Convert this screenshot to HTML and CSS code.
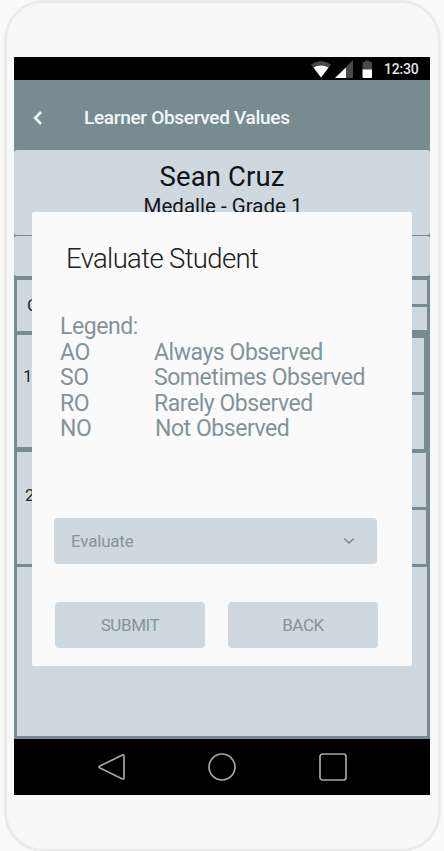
FILE: index.html
```html
<!DOCTYPE html>
<html lang="en">
<head>
<meta charset="utf-8">
<title>Learner Observed Values</title>
<link rel="stylesheet" href="styles.css">
</head>
<body>
<div class="phone">
  <main class="screen">
    <div class="status">
      <svg class="status-icons" width="64" height="19" viewBox="0 0 64 19">
        <path fill="#484848" d="M0 4.500Q10 -2.500 20 4.500L10 17.500Z"/>
        <path fill="#fff" d="M2.500 7.500Q10 3.500 17.500 7.500L10 17.500Z"/>
        <path fill="#484848" d="M42 0V18H24Z"/>
        <path fill="#fff" d="M35 7.500V18H24Z"/>
        <path fill="#484848" d="M51.500 2H54V0.500H58.500V2H61V10H51.500Z"/>
        <path fill="#fff" d="M51.500 9.500H61V17Q61 18 60 18H52.500Q51.500 18 51.500 17Z"/>
      </svg>
      <span class="clock">12:30</span>
    </div>
    <header class="appbar">
      <svg class="back-icon" width="10" height="14" viewBox="0 0 10 14"><path d="M8 1L2.200 7L8 13"/></svg>
      <h1 class="title">Learner Observed Values</h1>
    </header>
    <section class="student">
      <div class="name">Sean Cruz</div>
      <div class="grade">Medalle - Grade 1</div>
    </section>
    <div class="strip"></div>
    <section class="table">
      <div class="row head">
        <div class="cell core">C</div>
        <div class="split"><div class="cell"></div><div class="cell"></div></div>
      </div>
      <div class="row first">
        <div class="cell number">1</div>
        <div class="split"><div class="cell"></div><div class="cell"></div></div>
      </div>
      <div class="row second">
        <div class="cell number two">2</div>
        <div class="split"><div class="cell"></div><div class="cell"></div></div>
      </div>
      <div class="cell rest"></div>
    </section>
    <nav class="navbar">
      <svg width="28" height="28" viewBox="0 0 28 28"><path d="M25 2.200Q27 1.200 27 3.200V24.800Q27 26.800 25 25.800L3 15Q1.200 14 3 13Z"/></svg>
      <svg width="28" height="28" viewBox="0 0 28 28"><circle cx="14" cy="14" r="13"/></svg>
      <svg width="28" height="28" viewBox="0 0 28 28"><rect x="1" y="1" width="26" height="26" rx="2.500"/></svg>
    </nav>
    <div class="dialog" role="dialog">
      <h2 class="dialog-title">Evaluate Student</h2>
      <div class="legend">
        <div class="legend-row"><span>Legend:</span></div>
        <div class="legend-row"><span>AO</span><span class="meaning">Always Observed</span></div>
        <div class="legend-row"><span>SO</span><span class="meaning">Sometimes Observed</span></div>
        <div class="legend-row"><span>RO</span><span class="meaning">Rarely Observed</span></div>
        <div class="legend-row last"><span>NO</span><span class="meaning">Not Observed</span></div>
      </div>
      <div class="select">
        <span class="select-text">Evaluate</span>
        <svg width="12" height="8" viewBox="0 0 12 8"><path d="M1.200 1.500L6 6L10.800 1.500"/></svg>
      </div>
      <div class="actions">
        <button class="button submit">SUBMIT</button>
        <button class="button back">BACK</button>
      </div>
    </div>
  </main>
</div>
</body>
</html>
```
FILE: styles.css
```css
* { box-sizing: border-box; }
body {
  margin: 0;
  height: 851px;
  padding-left: 4px;
  overflow: hidden;
  background: #fafafa;
  font-family: Roboto, sans-serif;
}
.phone {
  width: 437px;
  height: 852px;
  padding: 54px 7px 0;
  border: 3px solid #ebebeb;
  border-radius: 40px;
  background: #f8f8f8;
}
.screen {
  position: relative;
  width: 416px;
  height: 738px;
  background: #788b90;
}
.status {
  display: flex;
  justify-content: flex-end;
  height: 23px;
  padding: 3px 11px 0 0;
  background: #000;
}
.clock {
  margin-left: 9px;
  width: 35px;
  font-size: 14px;
  font-weight: 500;
  line-height: 19px;
  letter-spacing: -0.200px;
  color: #e4e4e4;
  white-space: nowrap;
}
.appbar {
  display: flex;
  align-items: center;
  height: 70px;
  padding: 5px 0 0 19px;
  color: #f2f8fa;
}
.back-icon { fill: none; stroke: #f2f8fa; stroke-width: 2.600; }
.title {
  margin: 0 0 0 41px;
  font-size: 19px;
  font-weight: 500;
  line-height: 24px;
  letter-spacing: -0.300px;
  white-space: nowrap;
}
.student {
  height: 85px;
  padding-top: 11px;
  border-radius: 3px;
  background: #cfd8de;
  color: #101418;
  text-align: center;
}
.name { font-size: 27.500px; line-height: 32px; letter-spacing: 0.100px; }
.grade { padding: 1px 0 0 2px; font-size: 20.500px; line-height: 25px; letter-spacing: 0; }
.strip {
  height: 40px;
  margin-top: 1px;
  border-radius: 3px;
  background: #cfd8de;
}
.table { padding: 4px 3px 3px; }
.row { display: flex; }
.cell { background: #cfd8de; }
.row > .cell { width: 203px; font-size: 17px; color: #20272a; }
.split { display: flex; flex: 1; flex-direction: column; gap: 3px; }
.split .cell { flex: 1; }
.head { height: 51px; align-items: flex-start; }
.head > .cell { height: 51px; }
.head .split { height: 50px; }
.core { padding: 15px 0 0 10px; }
.first { height: 114px; margin-top: 4px; padding-right: 3px; }
.first > .cell { height: 112px; }
.first .split { height: 111px; margin-top: 3px; }
.row > .number { padding: 31px 0 0 6px; }
.second { height: 112px; margin-top: 3px; padding-right: 1px; }
.second .split { margin-top: 1px; }
.row > .two { padding: 33px 0 0 8px; }
.rest { height: 169px; margin-top: 3px; }
.navbar {
  display: flex;
  justify-content: center;
  align-items: center;
  gap: 83px;
  height: 56px;
  background: #000;
}
.navbar svg { fill: none; stroke: #a5a5a5; stroke-width: 1.700; }
.dialog {
  position: absolute;
  top: 155px;
  left: 18px;
  width: 380px;
  height: 454px;
  padding: 31px 34px 0 22px;
  border-radius: 2px;
  background: #fafafa;
}
.dialog-title {
  margin: 0 0 0 12px;
  font-size: 27.500px;
  font-weight: 300;
  line-height: 32px;
  letter-spacing: -0.650px;
  color: #202020;
  white-space: nowrap;
}
.legend {
  margin: 39px 0 0 6px;
  font-size: 23px;
  line-height: 25.500px;
  letter-spacing: -0.450px;
  color: #849398;
}
.legend-row { display: grid; grid-template-columns: 94px 1fr; white-space: nowrap; }
.last .meaning { padding-left: 1px; }
.select {
  display: flex;
  align-items: center;
  justify-content: space-between;
  width: 323px;
  height: 46px;
  margin-top: 76px;
  padding: 0 22px 0 17px;
  border-radius: 4px;
  background: #cfd8de;
  color: #84949a;
  font-size: 17px;
  letter-spacing: -0.200px;
}
.select-text { padding-top: 1px; }
.select svg { fill: none; stroke: #788b90; stroke-width: 1.600; }
.actions { display: flex; gap: 23px; margin: 38px 0 0 1px; }
.button {
  width: 150px;
  height: 46px;
  padding: 0;
  border: 0;
  border-radius: 4px;
  background: #cfd8de;
  color: #84949a;
  font: 400 17px Roboto, sans-serif;
  letter-spacing: -0.400px;
}
```
